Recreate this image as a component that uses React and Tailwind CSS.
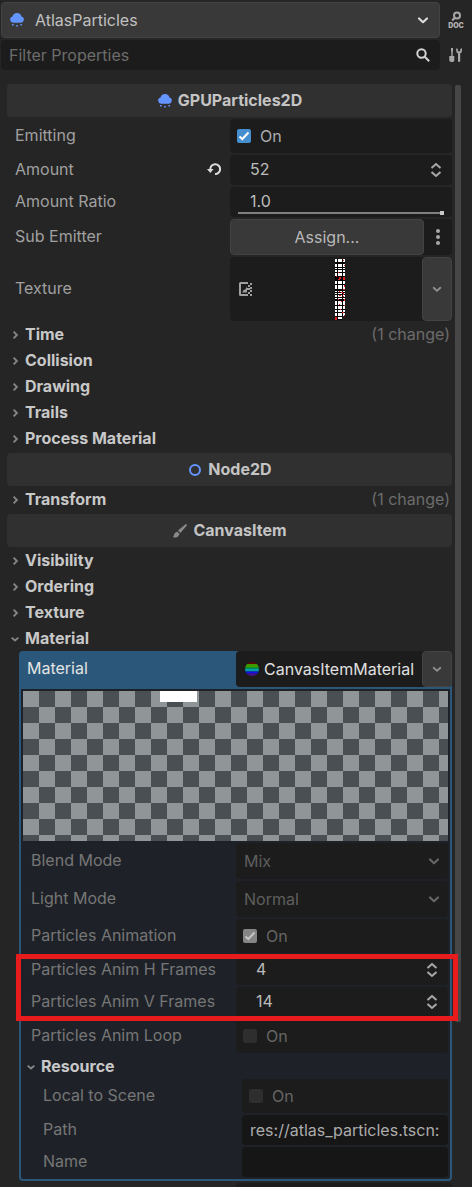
import React from "react";

const FRAME = "rounded-[4px] bg-[#1c1c1c]";

function Cloud() {
  return (
    <svg viewBox="0 0 16 16" className="size-4 shrink-0" fill="#6495ff" aria-hidden="true">
      <path d="M3.500 4.600A4.600 4.600 0 0 1 12.500 4.600A3.100 3.100 0 0 1 12 10.700H4A3.100 3.100 0 0 1 3.500 4.600Z" />
      <path d="M3 12h1.600v1.600H3zM7.200 13h1.600v1.600H7.200zM11.400 12H13v1.600h-1.600z" />
    </svg>
  );
}

function Ring() {
  return (
    <svg viewBox="0 0 16 16" className="size-4 shrink-0" fill="none" stroke="#6495ff" strokeWidth="2" aria-hidden="true">
      <circle cx="8" cy="8" r="5" />
    </svg>
  );
}

function Brush() {
  return (
    <svg viewBox="0 0 16 16" className="size-4 shrink-0" fill="#8a8a8a" aria-hidden="true">
      <path d="M14.6 1.4a1 1 0 0 0-1.4 0L6 7.6 8.4 10l6.200-7.200a1 1 0 0 0 0-1.400zM5.200 8.600 4 9.600c-2 0-1.500 3-3 4.400 2.600 1.200 5.600.4 5.900-2.200l.8-.9z" />
    </svg>
  );
}

function ChevronDown({ className = "text-[#8a8a8a]", size = "w-3 h-3" }) {
  return (
    <svg viewBox="0 0 12 12" className={`${size} shrink-0 ${className}`} fill="none" stroke="currentColor" strokeWidth="2.200" strokeLinecap="round" strokeLinejoin="round" aria-hidden="true">
      <path d="M2 4.500 6 8.200 10 4.500" />
    </svg>
  );
}

function FoldArrow({ open }) {
  return (
    <svg viewBox="0 0 8 8" className="size-2 shrink-0" fill="none" stroke="#858585" strokeWidth="1.900" aria-hidden="true">
      <path d={open ? "M.6 2.600 4 5.500 7.400 2.600" : "M2.600.7 5.900 4 2.600 7.300"} />
    </svg>
  );
}

function SpinArrows() {
  return (
    <svg viewBox="0 0 12 16" className="w-3 h-4 shrink-0" fill="none" stroke="#a8a8a8" strokeWidth="2" aria-hidden="true">
      <path d="M1.500 6 6 2 10.500 6M1.500 10 6 14 10.500 10" />
    </svg>
  );
}

function Title({ icon, children }) {
  return (
    <h2 className="flex h-[33px] items-center justify-center gap-[5px] rounded-[4px] bg-[#303030] font-bold text-[#c4c4c4]">
      {icon}
      <span className="pb-0.5">{children}</span>
    </h2>
  );
}

function Section({ name, note, open = false }) {
  return (
    <button type="button" aria-expanded={open} className="flex h-6 w-full items-center pl-1 text-left font-bold text-[#c8c8c8]">
      <FoldArrow open={open} />
      <span className="flex-1 pb-0.5 pl-1.5">{name}</span>
      {note && <span className="pr-0.5 pb-0.5 font-normal text-[#6c6c6c]">{note}</span>}
    </button>
  );
}

function Row({ label, id, dim = false, action, children }) {
  return (
    <div className="grid grid-cols-2 gap-px">
      <div className="flex items-center justify-between pr-2 pb-0.5 pl-2">
        <label htmlFor={id} className={dim ? "whitespace-nowrap text-[#767676]" : "whitespace-nowrap text-[#a0a0a0]"}>{label}</label>
        {action}
      </div>
      {children}
    </div>
  );
}

function Toggle({ id, checked, disabled }) {
  const box = disabled
    ? checked ? "bg-[#858585]" : "bg-[#2e2e2e]"
    : "bg-[#458fcf]";
  return (
    <div className={`flex h-[34px] items-center gap-[9px] px-[7px] ${FRAME}`}>
      <span className="relative size-3.5">
        <input id={id} type="checkbox" defaultChecked={checked} disabled={disabled} className={`block size-3.5 appearance-none rounded-[2px] ${box}`} />
        {checked && (
          <svg viewBox="0 0 14 14" className="pointer-events-none absolute inset-0 size-3.5" fill="none" stroke={disabled ? "#c4c4c4" : "#fff"} strokeWidth="2" aria-hidden="true">
            <path d="M2.500 7.500 5.300 10 11.500 3.500" />
          </svg>
        )}
      </span>
      <span className={disabled ? "text-[#656565]" : "text-[#acacac]"}>On</span>
    </div>
  );
}

function Spin({ id, value }) {
  return (
    <div className={`flex h-[30px] items-center pr-2.5 pl-5 ${FRAME}`}>
      <input id={id} type="text" inputMode="numeric" defaultValue={value} className="min-w-0 flex-1 bg-transparent pb-0.5 text-[#bcbcbc] outline-none" />
      <SpinArrows />
    </div>
  );
}

function Choice({ id, value }) {
  return (
    <div className={`relative h-9 ${FRAME}`}>
      <select id={id} disabled defaultValue={value} className="h-full w-full appearance-none bg-transparent px-2 text-[#5f5f5f] opacity-100">
        <option>{value}</option>
      </select>
      <span className="pointer-events-none absolute inset-y-0 right-2 flex items-center">
        <ChevronDown className="text-[#666666]" />
      </span>
    </div>
  );
}

function DropButton({ label }) {
  return (
    <button type="button" aria-label={label} className="flex w-[30px] shrink-0 items-center justify-center rounded-[4px] border border-[#434343] bg-[#393939]">
      <ChevronDown size="w-2.5 h-2.5" className="text-[#8f8f8f]" />
    </button>
  );
}

const ATLAS = [
  [0, 3], [5, 3], [9, 1], [11, 2], [14, 3], [22, 3], [26, 4], [32, 1], [34, 1],
  [36, 2], [39, 1], [42, 4], [47, 3], [51, 2], [54, 3], [58, 2],
];
const SPARKS = [
  [1, 17, 1, 1], [4, 18, 2, 2], [8, 18, 2, 3], [3, 20, 2, 1], [8, 1, 1, 1], [9, 6, 1, 1], [3, 13, 1, 1],
  [4, 32, 1, 1], [6, 33, 2, 1], [4, 36, 2, 1], [8, 37, 1, 1], [3, 40, 1, 1], [6, 42, 1, 1], [9, 46, 1, 1],
  [5, 50, 1, 1], [7, 53, 2, 1], [9, 56, 1, 1], [0, 58, 2, 3], [9, 26, 1, 2], [8, 30, 2, 1], [8, 34, 1, 2],
  [4, 45, 1, 1], [9, 40, 1, 2],
];

function AtlasPreview() {
  return (
    <svg viewBox="0 0 10 61" className="h-[61px] w-2.5" shapeRendering="crispEdges" role="img" aria-label="Particle atlas">
      <path fill="#000" d="M0 0h10v57H7v4H0z" />
      {ATLAS.map(([y, h]) => (
        <path key={y} fill="#fff" d={`M0 ${y}h2v${h}h-2zM3 ${y}h4v${h}h-4z${y < 57 ? `M8 ${y}h2v${h}h-2z` : ""}`} />
      ))}
      {SPARKS.map(([x, y, w, h]) => (
        <rect key={`${x}-${y}`} x={x} y={y} width={w} height={h} fill="#e02020" />
      ))}
    </svg>
  );
}

function TopBar() {
  return (
    <header className="flex flex-col gap-0.5 pt-0.5 pl-px">
      <div className="flex items-center">
        <button type="button" className="flex h-9 flex-1 items-center gap-2.5 rounded-[4px] border border-[#434343] bg-[#393939] pr-2.5 pl-[7px] text-left text-[#c0c0c0]">
          <Cloud />
          <span className="flex-1">AtlasParticles</span>
          <ChevronDown className="text-[#dcdcdc]" />
        </button>
        <button type="button" aria-label="Open documentation" className="flex w-8 justify-center">
          <svg viewBox="0 0 20 20" className="size-5" fill="none" stroke="#a8a8a8" aria-hidden="true">
            <circle cx="11" cy="5.500" r="3" strokeWidth="2" />
            <path d="M9 7.500 6.200 10.400" strokeWidth="2.200" />
            <text x="10" y="17.600" textAnchor="middle" fontFamily="Inter, sans-serif" fontSize="7" fontWeight="900" fill="#b0b0b0" stroke="none">DOC</text>
          </svg>
        </button>
      </div>
      <div className="flex items-center">
        <div className={`flex h-[30px] flex-1 items-center pr-2.5 pl-2 ${FRAME}`}>
          <input type="text" aria-label="Filter Properties" placeholder="Filter Properties" className="min-w-0 flex-1 bg-transparent outline-none placeholder:text-[#6c6c6c]" />
          <svg viewBox="0 0 14 14" className="size-3.5" fill="none" stroke="#d4d4d4" strokeWidth="2" aria-hidden="true">
            <circle cx="5.500" cy="5.500" r="4.200" />
            <path d="M8.500 8.500 13.200 13.200" />
          </svg>
        </div>
        <button type="button" aria-label="Property tools" className="flex w-8 justify-center">
          <svg viewBox="0 0 16 16" className="size-4" fill="#a8a8a8" aria-hidden="true">
            <path d="M3 1h2v3l-.3 1v4H6.300v4A1.800 1.800 0 0 1 4.500 15h-1A1.800 1.800 0 0 1 1.300 13V9h2V5L3 4z" />
            <path d="M8.200 1.200v2.600a3 3 0 0 0 1.800 2.700V14a1 1 0 0 0 2.200 0V6.500a3 3 0 0 0 1.800-2.700V1.200l-1.800.8v2.200H9.900V2z" />
          </svg>
        </button>
      </div>
    </header>
  );
}

function MaterialEditor() {
  return (
    <div className="ml-3">
      <div className="grid grid-cols-2 gap-px rounded-t-[4px] bg-[#2b587a] pb-0.5">
        <div className="flex items-center pb-0.5 pl-2 text-[#e4e4e4]">Material</div>
        <div className={`flex h-9 ${FRAME}`}>
          <button type="button" className="flex min-w-0 flex-1 items-center gap-1 pl-2 text-[#e0e0e0]">
            <svg viewBox="0 0 16 16" className="size-4 shrink-0" aria-hidden="true">
              <clipPath id="ball"><circle cx="8" cy="8" r="7" /></clipPath>
              <g clipPath="url(#ball)">
                <path fill="#5a0808" d="M0 0h16v3H0z" />
                <path fill="#3f9a00" d="M0 3h16v3H0z" />
                <path fill="#0c9c1c" d="M0 6h16v1.500H0z" />
                <path fill="#00a0a8" d="M0 7.500h16v3H0z" />
                <path fill="#1010f0" d="M0 10.500h16v2H0z" />
                <path fill="#48108c" d="M0 12.500h16V16H0z" />
              </g>
            </svg>
            CanvasItemMaterial
          </button>
          <DropButton label="Material options" />
        </div>
      </div>
      <div className="flex flex-col gap-0.5 rounded-b-[4px] border-2 border-t-0 border-[#2b587a] bg-[#1e2228] p-0.5">
        <div className="relative h-[150px] bg-[conic-gradient(#4a4f53_25%,#909597_0_50%,#4a4f53_0_75%,#909597_0)] bg-[length:32px_32px]">
          <div className="absolute top-0 left-[137px] h-[11px] w-[37px] bg-white" />
        </div>
        <Row label="Blend Mode" id="blend" dim><Choice id="blend" value="Mix" /></Row>
        <Row label="Light Mode" id="light" dim><Choice id="light" value="Normal" /></Row>
        <Row label="Particles Animation" id="anim" dim><Toggle id="anim" checked disabled /></Row>
        <div className="relative flex flex-col gap-0.5">
          <Row label="Particles Anim H Frames" id="hframes" dim><Spin id="hframes" value="4" /></Row>
          <Row label="Particles Anim V Frames" id="vframes" dim><Spin id="vframes" value="14" /></Row>
          <div className="pointer-events-none absolute -top-px -right-2.5 -bottom-1 -left-[7px] z-10 border-[5px] border-[#e81c1c]" />
        </div>
        <Row label="Particles Anim Loop" id="loop" dim><Toggle id="loop" disabled /></Row>
        <div>
          <Section name="Resource" open />
          <div className="flex flex-col gap-0.5 pl-3">
            <Row label="Local to Scene" id="local" dim><Toggle id="local" disabled /></Row>
            <Row label="Path" id="path" dim>
              <input id="path" type="text" readOnly defaultValue="res://atlas_particles.tscn:" className="h-[30px] w-full min-w-0 rounded-[4px] bg-[#161616] px-2 text-[#acacac] outline-none" />
            </Row>
            <Row label="Name" id="name" dim>
              <input id="name" type="text" className="h-[30px] w-full min-w-0 rounded-[4px] bg-[#161616] px-2 text-[#acacac] outline-none" />
            </Row>
          </div>
        </div>
      </div>
    </div>
  );
}

export default function App() {
  return (
    <div className="flex h-screen flex-col bg-[#252525] font-['Inter',sans-serif] text-[16px] leading-5">
      <TopBar />
      <div className="mt-3.5 flex min-h-0 flex-1 gap-[3px] overflow-hidden pr-[11px] pl-[7px]">
        <main className="flex min-w-0 flex-1 flex-col gap-0.5 *:shrink-0">
          <Title icon={<Cloud />}>GPUParticles2D</Title>
          <Row label="Emitting" id="emitting"><Toggle id="emitting" checked /></Row>
          <Row
            label="Amount"
            id="amount"
            action={
              <button type="button" aria-label="Revert Amount">
                <svg viewBox="0 0 14 14" className="size-3.5" fill="none" aria-hidden="true">
                  <path d="M3.300 8V7a4.900 4.900 0 1 1 4.700 5" stroke="#dcdcdc" strokeWidth="2" />
                  <path d="M0 7h6.600L3.300 11z" fill="#dcdcdc" />
                </svg>
              </button>
            }
          >
            <Spin id="amount" value="52" />
          </Row>
          <Row label="Amount Ratio" id="ratio">
            <div className={`relative h-[30px] pr-2 pl-5 ${FRAME}`}>
              <input id="ratio" type="text" inputMode="decimal" defaultValue="1.0" className="h-full w-full bg-transparent pb-0.5 text-[#bcbcbc] outline-none" />
              <input type="range" aria-label="Amount Ratio slider" min="0" max="1" step="0.01" defaultValue="1" className="absolute right-2 bottom-0.5 left-2 h-1 appearance-none bg-[linear-gradient(#808080,#808080)] bg-[length:100%_2px] bg-center bg-no-repeat [&::-webkit-slider-thumb]:size-1 [&::-webkit-slider-thumb]:appearance-none [&::-webkit-slider-thumb]:bg-[#c8c8c8]" />
            </div>
          </Row>
          <Row label="Sub Emitter" id="sub">
            <div className={`flex h-9 ${FRAME}`}>
              <button id="sub" type="button" className="flex-1 rounded-[4px] border border-[#434343] bg-[#393939] text-[#b8b8b8]">Assign...</button>
              <button type="button" aria-label="More" className="flex w-7 items-center justify-center">
                <svg viewBox="0 0 4 16" className="h-4 w-1" fill="#a8a8a8" aria-hidden="true">
                  <circle cx="2" cy="2" r="2" />
                  <circle cx="2" cy="8" r="2" />
                  <circle cx="2" cy="14" r="2" />
                </svg>
              </button>
            </div>
          </Row>
          <Row label="Texture" id="texture">
            <div className={`flex h-16 ${FRAME}`}>
              <button id="texture" type="button" className="flex flex-1 items-center pl-[9px]">
                <svg viewBox="0 0 14 14" className="size-3.5" fill="#a0a0a0" aria-hidden="true">
                  <path d="M1.500 0H8v2H2v10h6v2H1.500A1.500 1.500 0 0 1 0 12.500v-11A1.500 1.500 0 0 1 1.500 0z" />
                  <path d="M3 10.500 5 7.500 6 8 8 4.500V10.500z" />
                  <path d="M8 0h1v2H8zM11 1h2v2h-2zM9 3h2v2H9zM11 5h2v2h-2zM8 6h3v2H8zM11 8h2v2h-2zM9 10h2v2H9zM11 12h2v2h-2zM8 12h1v2H8z" />
                </svg>
                <span className="flex flex-1 justify-center pl-1"><AtlasPreview /></span>
              </button>
              <DropButton label="Texture options" />
            </div>
          </Row>
          <Section name="Time" note="(1 change)" />
          <Section name="Collision" />
          <Section name="Drawing" />
          <Section name="Trails" />
          <Section name="Process Material" />
          <Title icon={<Ring />}>Node2D</Title>
          <Section name="Transform" note="(1 change)" />
          <Title icon={<Brush />}>CanvasItem</Title>
          <Section name="Visibility" />
          <Section name="Ordering" />
          <Section name="Texture" />
          <div>
            <Section name="Material" open />
            <MaterialEditor />
          </div>
          <div className="ml-3 grid grid-cols-2 gap-px">
            <div className={`col-start-2 h-[30px] ${FRAME}`} />
          </div>
        </main>
        <div className="w-1.5 shrink-0 pt-px">
          <div className="h-[85%] rounded-[2px] bg-[#474747]" />
        </div>
      </div>
    </div>
  );
}
